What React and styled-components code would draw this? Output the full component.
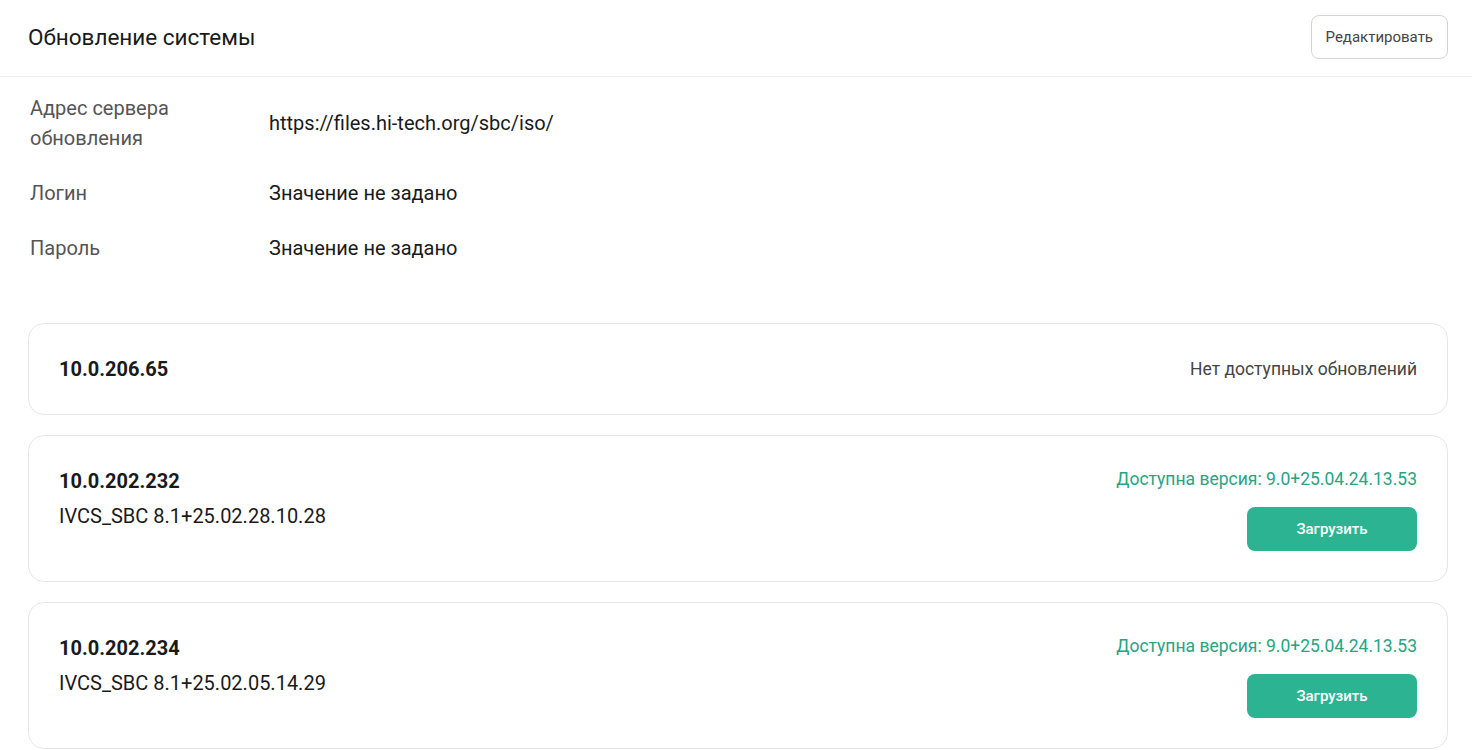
import React from 'react'
import styled, { createGlobalStyle } from 'styled-components'

const GlobalStyle = createGlobalStyle`
  body {
    margin: 0;
    background: #fff;
    font-family: Roboto, "Noto Sans", sans-serif;
    color: #1a1a1a;
  }
`

const settings = [
  { label: 'Адрес сервера обновления', value: 'https://files.hi-tech.org/sbc/iso/' },
  { label: 'Логин', value: 'Значение не задано' },
  { label: 'Пароль', value: 'Значение не задано' },
]

const servers = [
  { host: '10.0.206.65' },
  { host: '10.0.202.232', current: 'IVCS_SBC 8.1+25.02.28.10.28', available: '9.0+25.04.24.13.53' },
  { host: '10.0.202.234', current: 'IVCS_SBC 8.1+25.02.05.14.29', available: '9.0+25.04.24.13.53' },
]

function App() {
  return (
    <Page>
      <GlobalStyle />
      <Header>
        <Title>Обновление системы</Title>
        <EditButton>Редактировать</EditButton>
      </Header>
      <Info>
        {settings.map(s => (
          <InfoRow key={s.label}>
            <Label>{s.label}</Label>
            <Value>{s.value}</Value>
          </InfoRow>
        ))}
      </Info>
      <Cards>
        {servers.map(s => (
          <Card key={s.host}>
            <Left>
              <Host>{s.host}</Host>
              {s.current && <Current>{s.current}</Current>}
            </Left>
            <Right>
              {s.available ? (
                <>
                  <Available>Доступна версия: {s.available}</Available>
                  <LoadButton>Загрузить</LoadButton>
                </>
              ) : (
                <NoUpdates>Нет доступных обновлений</NoUpdates>
              )}
            </Right>
          </Card>
        ))}
      </Cards>
    </Page>
  )
}

export default App

const Page = styled.div`
  width: 1472px;
  min-height: 750px;
  box-sizing: border-box;
`
const Header = styled.div`
  height: 77px;
  box-sizing: border-box;
  display: flex;
  align-items: center;
  justify-content: space-between;
  padding: 0 24px 2px 28px;
  border-bottom: 1px solid #f0f0f0;
`
const Title = styled.h1`
  margin: 0;
  font-size: 22.5px;
  font-weight: 400;
  color: #1a1a1a;
`
const EditButton = styled.button`
  height: 44px;
  padding: 0 14px;
  border: 1px solid #d4d4d4;
  border-radius: 8px;
  background: #fff;
  font-family: Roboto, sans-serif;
  font-size: 15px;
  color: #444;
  cursor: pointer;
`
const Info = styled.div`
  display: flex;
  flex-direction: column;
  gap: 25px;
  padding: 16px 30px 0;
`
const InfoRow = styled.div`
  display: grid;
  grid-template-columns: 239px 1fr;
  align-items: center;
  font-size: 20px;
  line-height: 30px;
`
const Label = styled.div`
  color: #555;
  max-width: 200px;
`
const Value = styled.div`
  color: #1a1a1a;
`
const Cards = styled.div`
  display: flex;
  flex-direction: column;
  gap: 20px;
  padding: 60px 24px 0 28px;
`
const Card = styled.div`
  display: flex;
  justify-content: space-between;
  align-items: flex-start;
  padding: 30px;
  border: 1px solid #e6e6e6;
  border-radius: 16px;
`
const Left = styled.div`
  display: flex;
  flex-direction: column;
  gap: 5px;
  font-size: 20px;
  line-height: 30px;
`
const Host = styled.div`
  font-weight: 700;
  color: #1a1a1a;
`
const Current = styled.div`
  color: #1a1a1a;
`
const Right = styled.div`
  display: flex;
  flex-direction: column;
  align-items: flex-end;
  gap: 14px;
`
const NoUpdates = styled.div`
  font-size: 17.5px;
  line-height: 30px;
  color: #444;
`
const Available = styled.div`
  font-size: 17.5px;
  line-height: 27px;
  color: #28a383;
`
const LoadButton = styled.button`
  width: 170px;
  height: 44px;
  border: none;
  border-radius: 8px;
  background: #2cb492;
  color: #fff;
  font-family: Roboto, sans-serif;
  font-size: 15px;
  font-weight: 500;
  cursor: pointer;
`
